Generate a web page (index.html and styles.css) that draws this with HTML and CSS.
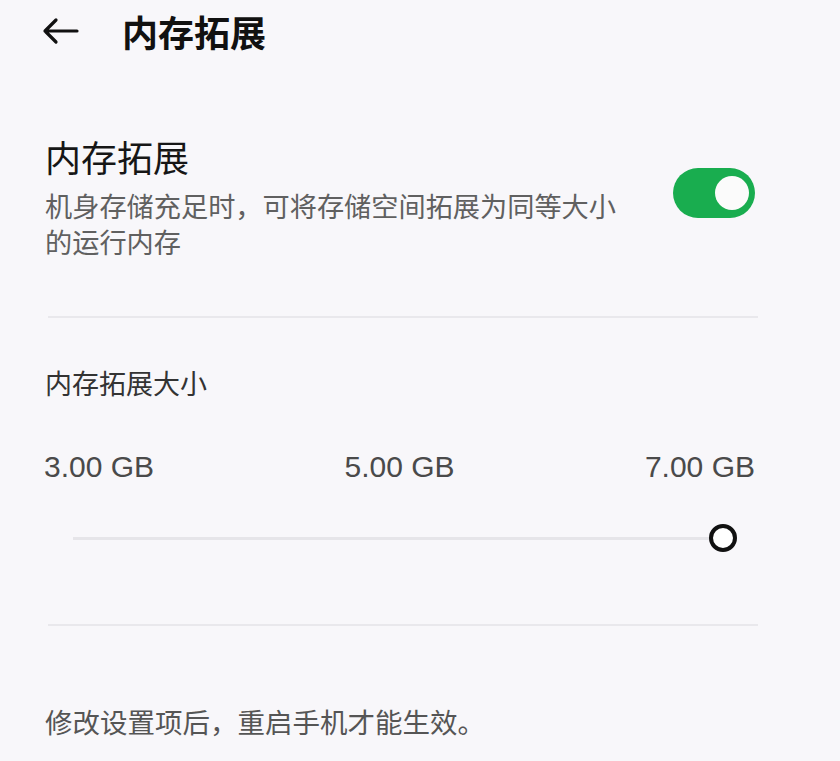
FILE: index.html
```html
<!DOCTYPE html>
<html>
	<head>
	<meta charset="utf-8"/>
		<link rel="stylesheet" href="styles.css">
	</head>
	<body>
		<div class="topbar">
			<svg class="back" width="38" height="28" viewBox="0 0 38 28">
				<path d="M36 14H4M15 3L4 14l11 11" fill="none" stroke="#111" stroke-width="3.2" stroke-linecap="round" stroke-linejoin="round"/>
			</svg>
			<div class="page-title">内存拓展</div>
		</div>

		<div class="switch-row">
			<div class="switch-text">
				<div class="item-title">内存拓展</div>
				<div class="item-desc">机身存储充足时，可将存储空间拓展为同等大小的运行内存</div>
			</div>
			<div class="toggle on"><div class="toggle-knob"></div></div>
		</div>

		<div class="divider first"></div>

		<div class="size-label">内存拓展大小</div>

		<div class="size-values">
			<span>3.00 GB</span>
			<span>5.00 GB</span>
			<span>7.00 GB</span>
		</div>

		<div class="slider">
			<div class="slider-track"></div>
			<div class="slider-knob"></div>
		</div>

		<div class="divider second"></div>

		<div class="note">修改设置项后，重启手机才能生效。</div>
	</body>
</html>
```

FILE: styles.css
```css
body{
	margin: 0;
	background: #f8f7fa;
	font-family: "Noto Sans CJK SC", "Noto Sans", sans-serif;
	color: #111;
}
.topbar{
	height: 62px;
	display: flex;
	align-items: center;
	padding-left: 41px;
}
.back{
	display: block;
}
.page-title{
	margin-left: 43px;
	font-size: 36px;
	font-weight: 700;
	line-height: 62px;
}

.switch-row{
	display: flex;
	align-items: flex-start;
	margin-top: 70px;
	padding: 0 85px 0 45px;
}
.switch-text{
	flex: 1;
}
.item-title{
	font-size: 36px;
	line-height: 48px;
	color: #161616;
}
.item-desc{
	margin-top: 7px;
	width: 590px;
	font-size: 27.2px;
	line-height: 36px;
	color: #606060;
}
.toggle{
	position: relative;
	margin-top: 36px;
	width: 82px;
	height: 50px;
	border-radius: 25px;
	background: #19ad4f;
}
.toggle-knob{
	position: absolute;
	right: 6px;
	top: 8px;
	width: 34px;
	height: 34px;
	border-radius: 50%;
	background: #fbfbfb;
}

.divider{
	height: 2px;
	margin: 0 82px 0 48px;
	background: #e9e8ec;
}
.divider.first{
	margin-top: 57px;
}
.divider.second{
	margin-top: 71px;
}

.size-label{
	margin-top: 47px;
	padding-left: 45px;
	font-size: 27px;
	line-height: 36px;
	color: #333;
}
.size-values{
	display: flex;
	justify-content: space-between;
	margin-top: 46px;
	padding: 0 85px 0 44px;
	font-family: "Liberation Sans", Arial, sans-serif;
	font-size: 30px;
	line-height: 40px;
	color: #4a4a4a;
}

.slider{
	display: flex;
	align-items: center;
	height: 30px;
	margin: 36px 103px 0 73px;
}
.slider-track{
	flex: 1;
	height: 3px;
	background: #e6e5e9;
}
.slider-knob{
	width: 20px;
	height: 20px;
	border: 4px solid #111;
	border-radius: 50%;
	background: #fff;
}

.note{
	margin-top: 77px;
	padding-left: 45px;
	font-size: 27.5px;
	line-height: 36px;
	color: #555;
}
```
